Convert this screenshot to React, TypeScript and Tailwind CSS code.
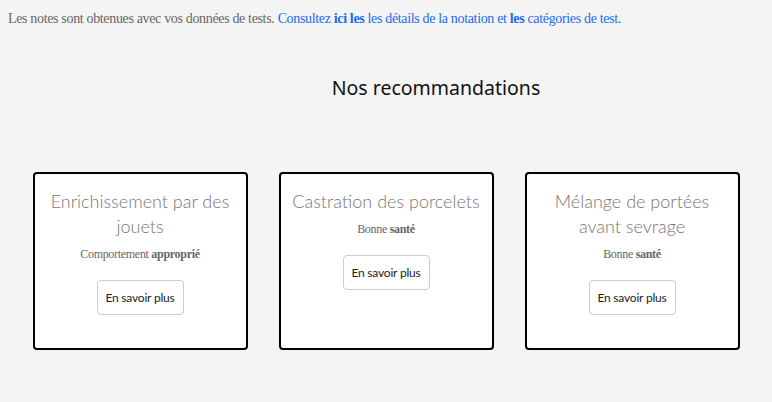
import React from "react";

type Reco = {
  title: string;
  category: string;
  bold: string;
};

const recos: Reco[] = [
  { title: "Enrichissement par des jouets", category: "Comportement ", bold: "approprié" },
  { title: "Castration des porcelets", category: "Bonne ", bold: "santé" },
  { title: "Mélange de portées avant sevrage", category: "Bonne ", bold: "santé" },
];

function RecoCard({ reco }: { reco: Reco }) {
  return (
    <div className="flex h-[178px] w-[215px] flex-col items-center rounded-[4px] border-2 border-black bg-white px-2 pt-[15px]">
      <h3 className="text-center text-[18px] font-light leading-[25px] text-[#777] [font-family:Lato,sans-serif]">
        {reco.title}
      </h3>
      <p className="mt-[6px] text-[12px] tracking-[-0.3px] text-[#666] [font-family:'Liberation_Serif',serif]">
        {reco.category}
        <b className="font-bold">{reco.bold}</b>
      </p>
      <button className="mt-[17px] h-[35px] w-[87px] rounded-[4px] border border-[#ccc] bg-white text-[12px] tracking-[-0.2px] text-[#222] [font-family:Lato,sans-serif]">
        En savoir plus
      </button>
    </div>
  );
}

export default function App() {
  return (
    <div className="min-h-[402px] w-full bg-[#f4f4f4]">
      <p className="px-[8px] pt-[9px] text-[14px] leading-[20px] tracking-[-0.34px] text-[#666] [font-family:'Liberation_Serif',serif]">
        Les notes sont obtenues avec vos données de tests.{" "}
        <a className="text-[#1a6cf2]">
          Consultez <b>ici les</b> les détails de la notation et <b>les</b> catégories de test.
        </a>
      </p>
      <h2 className="mt-[44px] text-center text-[19.5px] leading-[30px] text-[#111] [font-family:'Noto_Sans',sans-serif]">
        <span className="pl-[100px]">Nos recommandations</span>
      </h2>
      <div className="mt-[69px] flex justify-center gap-[31px]">
        {recos.map((r) => (
          <RecoCard key={r.title} reco={r} />
        ))}
      </div>
    </div>
  );
}
